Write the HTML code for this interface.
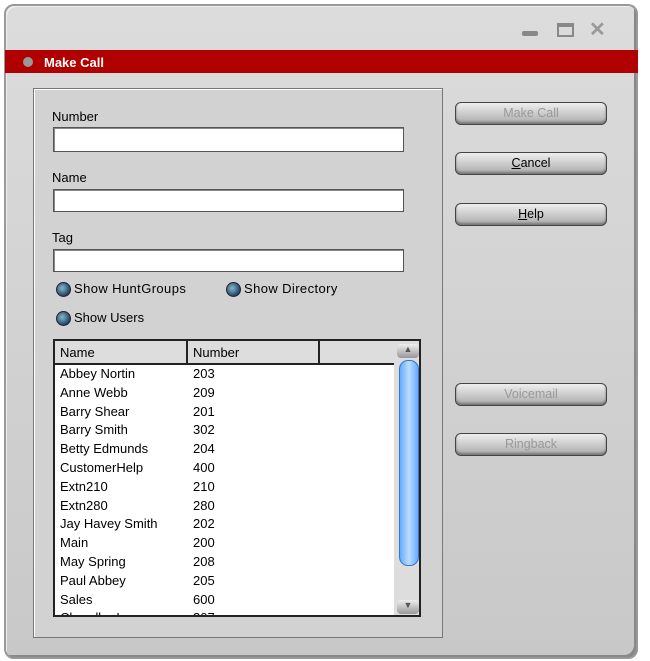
<html><head><style>
body{margin:0;width:650px;height:661px;background:#fff;position:relative;overflow:hidden;font-family:"Liberation Sans",sans-serif;font-size:13px;color:#000}
.a{position:absolute}
.win{left:4px;top:4px;width:634px;height:655px;border-radius:10px;background:linear-gradient(#dcdcdc,#c8c8c8);box-shadow:inset 0 0 0 2px #999,inset 3px 3px 0 #eee,inset -4px -4px 0 #888}
.red{left:5px;top:50px;width:633px;height:23px;background:#b00000}
.panel{left:33px;top:88px;width:408px;height:548px;border:1px solid #777;box-shadow:inset 1px 1px 0 #fff;background:#d2d2d2}
.inp{background:#fff;border:1px solid #555;box-shadow:inset 1px 1px 0 #888}
.btn{left:455px;width:150px;height:21px;border:1px solid #444;border-radius:6px;background:linear-gradient(#eee,#aaa);text-align:center;line-height:21px;font-size:12.5px;box-shadow:inset 0 -2px 2px #777}
.dis{color:#999}
.chk{width:13px;height:13px;border-radius:50%;background:radial-gradient(circle at 40% 40%,#7ab 10%,#246 70%);border:1px solid #223}
</style></head><body>
<div class="a win"></div>
<div class="a" style="left:522px;top:31px;width:16px;height:5px;background:#888;border-radius:2px"></div>
<div class="a" style="left:557px;top:23px;width:17px;height:14px;border:2px solid #888;border-top-width:4px;box-sizing:border-box"></div>
<div class="a" style="left:589px;top:17px;font-size:20px;font-weight:bold;color:#999">✕</div>
<div class="a red"></div>
<div class="a" style="left:23px;top:57px;width:10px;height:10px;border-radius:50%;background:#999"></div>
<div class="a" style="left:44px;top:55px;color:#fff;font-weight:bold;font-size:13px">Make Call</div>
<div class="a panel"></div>
<div class="a" style="left:52px;top:109px">Number</div>
<div class="a inp" style="left:53px;top:127px;width:349px;height:23px"></div>
<div class="a" style="left:52px;top:170px">Name</div>
<div class="a inp" style="left:53px;top:189px;width:349px;height:21px"></div>
<div class="a" style="left:52px;top:230px">Tag</div>
<div class="a inp" style="left:53px;top:249px;width:349px;height:21px"></div>
<div class="a chk" style="left:56px;top:282px"></div><div class="a" style="left:74px;top:281px;letter-spacing:0.4px">Show HuntGroups</div>
<div class="a chk" style="left:226px;top:282px"></div><div class="a" style="left:244px;top:281px;letter-spacing:0.4px">Show Directory</div>
<div class="a chk" style="left:56px;top:311px"></div><div class="a" style="left:74px;top:310px">Show Users</div>
<div class="a" style="left:53px;top:339px;width:368px;height:278px;background:#fff;border:2px solid #222;box-sizing:border-box;overflow:hidden">
<div class="a" style="left:5px;top:24px;line-height:18.8px">Abbey Nortin<br>Anne Webb<br>Barry Shear<br>Barry Smith<br>Betty Edmunds<br>CustomerHelp<br>Extn210<br>Extn280<br>Jay Havey Smith<br>Main<br>May Spring<br>Paul Abbey<br>Sales<br>Chandler Lacy</div>
<div class="a" style="left:138px;top:24px;line-height:18.8px">203<br>209<br>201<br>302<br>204<br>400<br>210<br>280<br>202<br>200<br>208<br>205<br>600<br>207</div>
<div class="a" style="left:0;top:0;width:340px;height:22px;background:#ddd;border-bottom:2px solid #222"></div>
<div class="a" style="left:131px;top:0;width:2px;height:22px;background:#222"></div>
<div class="a" style="left:263px;top:0;width:2px;height:22px;background:#222"></div>
<div class="a" style="left:5px;top:4px">Name</div><div class="a" style="left:138px;top:4px">Number</div>
<div class="a" style="left:339px;top:0;width:27px;height:276px;background:#ddd"></div>
<div class="a" style="left:342px;top:3px;width:22px;height:14px;border-radius:4px;background:linear-gradient(#eee,#999);font-size:9px;text-align:center;color:#555">▲</div>
<div class="a" style="left:344px;top:19px;width:18px;height:204px;border-radius:9px;background:linear-gradient(90deg,#6af,#bdf,#6af);border:1px solid #37c"></div>
<div class="a" style="left:342px;top:259px;width:22px;height:14px;border-radius:4px;background:linear-gradient(#eee,#999);font-size:9px;text-align:center;color:#555">▼</div>
</div>
<div class="a btn dis" style="top:102px">Make Call</div>
<div class="a btn" style="top:152px"><u>C</u>ancel</div>
<div class="a btn" style="top:203px"><u>H</u>elp</div>
<div class="a btn dis" style="top:383px">Voicemail</div>
<div class="a btn dis" style="top:433px">Ringback</div>
</body></html>
